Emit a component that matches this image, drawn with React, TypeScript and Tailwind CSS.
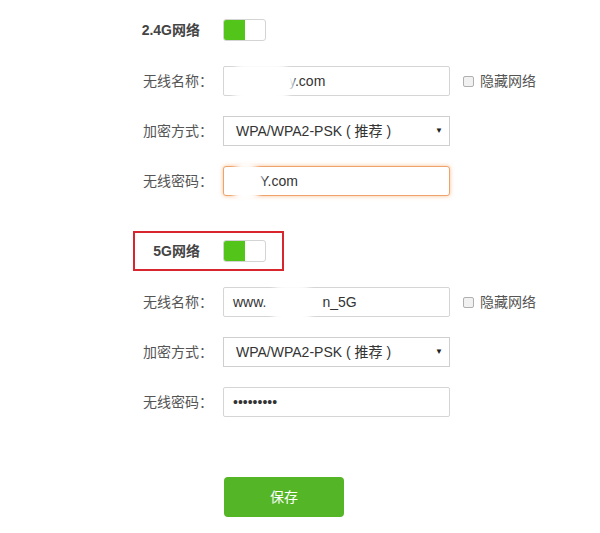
import React from 'react';

const font = { fontFamily: '"Liberation Sans", "Noto Sans CJK SC", sans-serif' };

function Toggle() {
  return (
    <div className="flex h-[22px] w-[43px] overflow-hidden rounded-[3px] border border-[#d4d4d4] bg-white">
      <div className="w-[21px] bg-[#52c41a]" />
    </div>
  );
}

function SectionHeader({ title, marked }: { title: string; marked?: boolean }) {
  return (
    <div
      className={`ml-[133px] flex h-[40px] w-[151px] items-center border-2 ${
        marked ? 'border-[#d7262e]' : 'border-transparent'
      }`}
    >
      <span className="w-[65px] text-right text-[14px] font-bold text-[#444]">{title}</span>
      <div className="ml-[23px]">
        <Toggle />
      </div>
    </div>
  );
}

function Row({ label, children, extra }: { label: string; children: React.ReactNode; extra?: React.ReactNode }) {
  return (
    <div className="flex h-[30px] items-center">
      <span className="w-[213px] text-right text-[14px] text-[#555]">{label}</span>
      <div className="ml-[10px] flex h-[30px] w-[227px]">{children}</div>
      {extra}
    </div>
  );
}

function Blob({ className }: { className: string }) {
  return <div className={`absolute rounded-full bg-white blur-[2px] ${className}`} />;
}

function HiddenCheck() {
  return (
    <label className="ml-[13px] flex items-center gap-[6px] text-[14px] text-[#555]">
      <span className="h-[11px] w-[11px] rounded-[2px] border border-[#b0b0b0] bg-[#f1f1f1]" />
      隐藏网络
    </label>
  );
}

function Select() {
  return (
    <div className="flex h-full w-full items-center justify-between border border-[#cfcfcf] bg-white pl-[12px] pr-[6px] text-[14px] text-[#333]">
      <span className="whitespace-pre">WPA/WPA2-PSK ( 推荐 )</span>
      <span className="text-[8px] text-[#222]">▼</span>
    </div>
  );
}

export default function App() {
  return (
    <main className="min-h-[533px] w-[600px] bg-white" style={font}>
      <div className="flex flex-col pt-[10px]">
        {/* 2.4G */}
        <SectionHeader title="2.4G网络" />
        <div className="mt-[16px] flex flex-col gap-[20px]">
          <Row label="无线名称：" extra={<HiddenCheck />}>
            <div className="relative flex h-full w-full items-center rounded-[2px] border border-[#d5d5d5] bg-white text-[14px] text-[#333]">
              <span className="pl-[65px]">y.com</span>
              <Blob className="left-[4px] top-[-3px] h-[36px] w-[66px]" />
            </div>
          </Row>
          <Row label="加密方式：">
            <Select />
          </Row>
          <Row label="无线密码：">
            <div className="relative flex h-full w-full items-center rounded-[3px] border border-[#eea36b] bg-white text-[14px] text-[#333] shadow-[0_0_4px_rgba(240,140,60,0.55)]">
              <span className="pl-[36px]">Y.com</span>
              <Blob className="left-[6px] top-[-4px] h-[38px] w-[32px]" />
            </div>
          </Row>
        </div>

        {/* 5G */}
        <div className="mt-[35px]">
          <SectionHeader title="5G网络" marked />
        </div>
        <div className="mt-[16px] flex flex-col gap-[20px]">
          <Row label="无线名称：" extra={<HiddenCheck />}>
            <div className="relative flex h-full w-full items-center rounded-[2px] border border-[#d5d5d5] bg-white text-[14px] text-[#333]">
              <span className="pl-[9px]">www.</span>
              <span className="ml-[56px]">n_5G</span>
              <Blob className="left-[43px] top-[-3px] h-[36px] w-[50px]" />
            </div>
          </Row>
          <Row label="加密方式：">
            <Select />
          </Row>
          <Row label="无线密码：">
            <div className="flex h-full w-full items-center rounded-[2px] border border-[#d5d5d5] bg-white text-[14px] text-[#333]">
              <span className="pl-[9px] leading-none">•••••••••</span>
            </div>
          </Row>
        </div>

        <div className="ml-[224px] mt-[60px]">
          <button className="h-[40px] w-[120px] rounded-[4px] bg-[#54b526] text-[14px] text-white">
            保存
          </button>
        </div>
      </div>
    </main>
  );
}
